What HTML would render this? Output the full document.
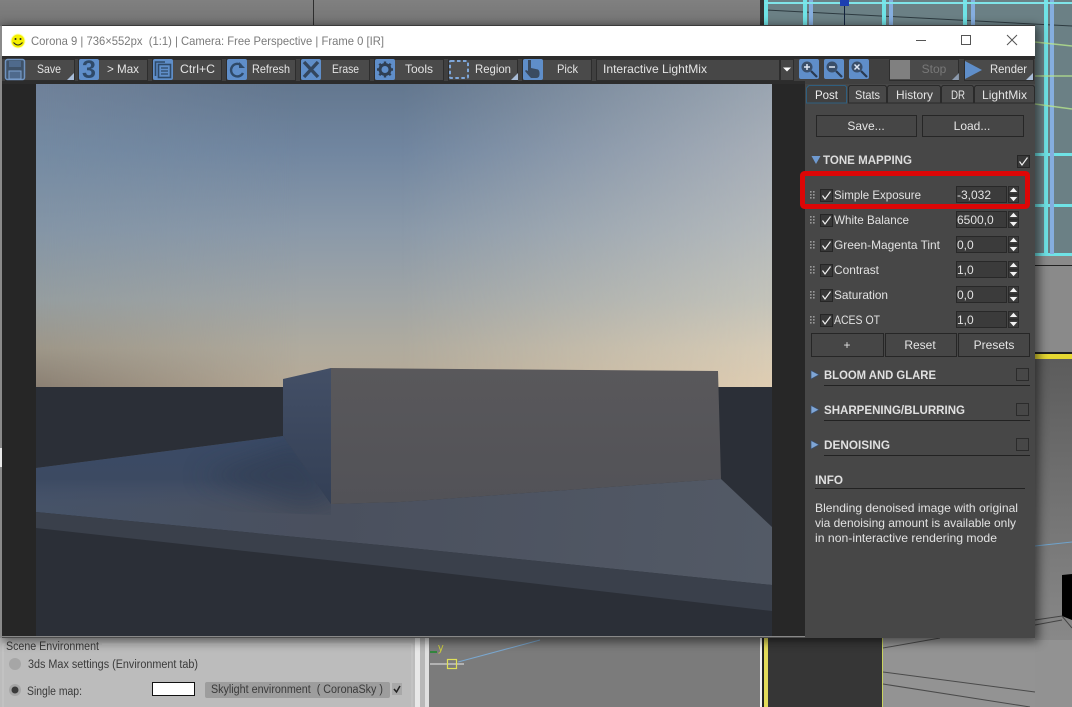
<!DOCTYPE html>
<html><head><meta charset="utf-8"><style>
html,body{margin:0;padding:0;background:#777;overflow:hidden}
svg{display:block}
text{font-family:"Liberation Sans",Arial,sans-serif;font-size:12px;fill:#e2e2e2;white-space:pre}
.tb{text-anchor:middle;font-size:12px;fill:#e4e4e4}
.tl{font-size:12px;fill:#e4e4e4}
.h{font-weight:bold;fill:#dcdcdc;font-size:12px}
.d{fill:#3a3a3a;font-size:11.5px}
</style></head><body>
<svg width="1072" height="707" viewBox="0 0 1072 707" xmlns="http://www.w3.org/2000/svg">
<defs>
<linearGradient id="sL" x1="0" y1="84" x2="0" y2="388" gradientUnits="userSpaceOnUse"><stop offset="0" stop-color="#6f8199"/><stop offset=".22" stop-color="#748aa2"/><stop offset=".48" stop-color="#8495a6"/><stop offset=".71" stop-color="#959d9f"/><stop offset=".87" stop-color="#9d9688"/><stop offset="1" stop-color="#8a7f72"/></linearGradient>
<linearGradient id="sM" x1="0" y1="84" x2="0" y2="388" gradientUnits="userSpaceOnUse"><stop offset="0" stop-color="#63778f"/><stop offset=".22" stop-color="#7186a0"/><stop offset=".48" stop-color="#8a99a9"/><stop offset=".71" stop-color="#a0a5a6"/><stop offset=".87" stop-color="#b0ab9e"/><stop offset="1" stop-color="#b7aa96"/></linearGradient>
<linearGradient id="sR" x1="0" y1="84" x2="0" y2="388" gradientUnits="userSpaceOnUse"><stop offset="0" stop-color="#9aa5b1"/><stop offset=".22" stop-color="#a8afb8"/><stop offset=".48" stop-color="#b5babc"/><stop offset=".71" stop-color="#c3c3ba"/><stop offset=".87" stop-color="#d6cbb6"/><stop offset="1" stop-color="#dfcdb2"/></linearGradient>
<linearGradient id="mlg" x1="36" y1="0" x2="300" y2="0" gradientUnits="userSpaceOnUse"><stop offset="0" stop-color="#fff"/><stop offset="1" stop-color="#000"/></linearGradient>
<linearGradient id="mrg" x1="400" y1="0" x2="772" y2="0" gradientUnits="userSpaceOnUse"><stop offset="0" stop-color="#000"/><stop offset="1" stop-color="#fff"/></linearGradient>
<mask id="ml" maskUnits="userSpaceOnUse" x="0" y="0" width="1072" height="707"><rect width="1072" height="707" fill="url(#mlg)"/></mask>
<mask id="mr" maskUnits="userSpaceOnUse" x="0" y="0" width="1072" height="707"><rect width="1072" height="707" fill="url(#mrg)"/></mask>
<linearGradient id="top" x1="0" y1="0" x2="0" y2="26" gradientUnits="userSpaceOnUse"><stop offset="0" stop-color="#808080"/><stop offset="1" stop-color="#747474"/></linearGradient>
<linearGradient id="shad" x1="0" y1="436" x2="0" y2="508" gradientUnits="userSpaceOnUse"><stop offset="0" stop-color="#3a4a66"/><stop offset=".6" stop-color="#3c4a62"/><stop offset="1" stop-color="#44506a" stop-opacity="0"/></linearGradient>
<linearGradient id="floor" x1="36" y1="480" x2="772" y2="560" gradientUnits="userSpaceOnUse"><stop offset="0" stop-color="#465368"/><stop offset=".4" stop-color="#4a505e"/><stop offset="1" stop-color="#535a66"/></linearGradient>
<linearGradient id="side" x1="0" y1="370" x2="0" y2="504" gradientUnits="userSpaceOnUse"><stop offset="0" stop-color="#434f66"/><stop offset="1" stop-color="#333f55"/></linearGradient>
<linearGradient id="face" x1="0" y1="368" x2="0" y2="504" gradientUnits="userSpaceOnUse"><stop offset="0" stop-color="#59585b"/><stop offset="1" stop-color="#525257"/></linearGradient>
<linearGradient id="rg" x1="0" y1="359" x2="0" y2="640" gradientUnits="userSpaceOnUse"><stop offset="0" stop-color="#5c5c5c"/><stop offset="1" stop-color="#888"/></linearGradient>
<clipPath id="shClip"><polygon points="36,468 283,436 331,504 331,515 36,505"/></clipPath>
<filter id="ws" x="-5%" y="-5%" width="110%" height="110%"><feGaussianBlur stdDeviation="5"/></filter>
<filter id="b6" x="-50%" y="-50%" width="200%" height="200%"><feGaussianBlur stdDeviation="12"/></filter>
<g id="cb"><rect x=".5" y=".5" width="12" height="12" fill="#383838" stroke="#262626"/><path d="M2.500 6.500L5 10L10.500 2.500" fill="none" stroke="#f0f0f0" stroke-width="1.200"/></g>
<g id="grip" fill="#9a9a9a"><rect x="0" y="0" width="1.600" height="1.600"/><rect x="3" y="0" width="1.600" height="1.600"/><rect x="0" y="3" width="1.600" height="1.600"/><rect x="3" y="3" width="1.600" height="1.600"/><rect x="0" y="6" width="1.600" height="1.600"/><rect x="3" y="6" width="1.600" height="1.600"/></g>
<g id="spin"><rect x=".5" y=".5" width="10" height="7.500" fill="#3c3c3c" stroke="#2a2a2a"/><rect x=".5" y="9" width="10" height="7.500" fill="#3c3c3c" stroke="#2a2a2a"/><path d="M1.800 6L5.500 1.800L9.200 6Z M1.800 11L9.200 11L5.500 15.300Z" fill="#f2f2f2"/></g>
<g id="btn"><rect x=".5" y=".5" width="69" height="21" fill="#4a4a4a" stroke="#2d2d2d"/></g>
<g id="corner"><path d="M0 7L7 0L7 7Z" fill="#a9bdd8"/></g>
</defs>

<!-- backgrounds -->
<rect width="1072" height="707" fill="#777"/>
<rect width="762" height="26" fill="url(#top)"/>
<rect x="313" y="0" width="1" height="26" fill="#2e2e2e"/>
<rect x="760" y="0" width="5" height="26" fill="#333"/>

<!-- top right viewport -->
<rect x="765" y="0" width="307" height="256" fill="#6b8085"/>
<path d="M766 10L1072 26" stroke="#2d3a40" stroke-width="1" fill="none"/>
<g fill="#6fe3e6">
<rect x="764" y="0" width="4" height="26"/><rect x="803" y="0" width="4" height="26"/><rect x="882" y="0" width="4" height="26"/><rect x="963" y="0" width="4" height="26"/><rect x="1044" y="0" width="4" height="256"/>
<rect x="1035" y="153" width="37" height="3"/><rect x="1035" y="204" width="37" height="3"/><rect x="1035" y="253" width="37" height="3"/>
</g>
<g fill="#85aedf">
<rect x="809" y="0" width="4" height="26"/><rect x="889" y="0" width="4" height="26"/><rect x="971" y="0" width="4" height="26"/><rect x="1050" y="0" width="4" height="254"/>
</g>
<rect x="765" y="2" width="307" height="2" fill="#7fe4e8"/>
<rect x="840" y="0" width="9" height="6" fill="#1c3fb0"/><rect x="844" y="6" width="1" height="20" fill="#12233d"/>
<path d="M1035 42L1072 46M1035 76L1072 76M1035 104L1072 109" stroke="#b7e48c" stroke-width="1.500" fill="none" opacity=".8"/>
<rect x="1035" y="256" width="37" height="97" fill="#8a8a8a"/>
<rect x="1035" y="265" width="37" height="1" fill="#222"/>
<rect x="1035" y="352" width="37" height="2" fill="#1e1e1e"/>
<rect x="1035" y="354" width="37" height="5" fill="#e6d832"/>
<rect x="1035" y="359" width="37" height="290" fill="url(#rg)"/>
<rect x="1035" y="640" width="37" height="67" fill="#929292"/>
<path d="M1035 546L1072 542" stroke="#6fa3cc" fill="none"/>
<path d="M1062 575L1072 574L1072 620L1062 616Z" fill="#000"/>
<path d="M1035 620L1062 616L1072 628M1035 625L1062 620" stroke="#444" fill="none"/>

<!-- bottom area -->
<rect x="0" y="638" width="415" height="69" fill="#bcbcbc"/>
<rect x="415" y="638" width="5" height="69" fill="#e8e8e8"/>
<rect x="420" y="638" width="5" height="69" fill="#b8b8b8"/>
<rect x="425" y="638" width="4" height="69" fill="#e0e0e0"/>
<rect x="429" y="638" width="331" height="69" fill="#7b7b7b"/>
<path d="M3 707V644H5M102 644H412V707" fill="none" stroke="#c8c8c8"/>
<text x="6" y="650" class="d" textLength="93" lengthAdjust="spacingAndGlyphs">Scene Environment</text>
<circle cx="15" cy="664" r="6" fill="#a6a6a6"/>
<circle cx="15" cy="690" r="6" fill="#a6a6a6"/><circle cx="15" cy="690" r="3.500" fill="#3a3a3a"/>
<text x="28" y="668" class="d" textLength="170" lengthAdjust="spacingAndGlyphs">3ds Max settings (Environment tab)</text>
<text x="27" y="695" class="d" textLength="55" lengthAdjust="spacingAndGlyphs">Single map:</text>
<rect x="152.500" y="682.500" width="42" height="13" fill="#fff" stroke="#111"/>
<rect x="205" y="682" width="185" height="16" rx="2" fill="#9d9d9d"/>
<text x="211" y="693" class="d" textLength="172" lengthAdjust="spacingAndGlyphs">Skylight environment  ( CoronaSky )</text>
<rect x="392" y="683" width="10" height="12" fill="#a8a8a8"/>
<path d="M394 689L396.500 692L400 686" stroke="#222" stroke-width="1.500" fill="none"/>
<path d="M430 652H437" stroke="#1c8a2c" stroke-width="1.500"/>
<text x="438" y="651" style="fill:#cfcf40;font-size:11px">y</text>
<path d="M430 664H464" stroke="#e8e8e8"/>
<rect x="447.500" y="659.500" width="9" height="9" fill="none" stroke="#dfe05a" stroke-width="1.200"/>
<path d="M458 662L540 640" stroke="#7aa7cf" fill="none"/>
<rect x="760" y="638" width="2" height="69" fill="#f2f2f2"/>
<rect x="762" y="638" width="2" height="69" fill="#222"/>
<rect x="764" y="638" width="4" height="69" fill="#e4dc5a"/>
<rect x="768" y="638" width="114" height="69" fill="#363636"/>
<rect x="882" y="638" width="1" height="69" fill="#c9d35f"/>
<rect x="883" y="638" width="152" height="69" fill="#939393"/>
<path d="M883 648L940 638M883 672L1035 692M883 684L1030 707" stroke="#4a4a4a" fill="none"/>

<!-- window shadow & window -->
<rect x="2" y="26" width="1037" height="616" fill="#000" opacity=".5" filter="url(#ws)"/>
<rect x="2" y="25" width="1033" height="1" fill="#3a3a3a"/>
<rect x="2" y="26" width="1033" height="30" fill="#fff"/>
<rect x="2" y="56" width="1033" height="582" fill="#404040"/>
<rect x="2" y="56" width="1033" height="3" fill="#2c2c2c"/>
<rect x="2" y="81" width="803" height="3" fill="#2c2c2c"/>
<rect x="2" y="84" width="34" height="553" fill="#262626"/>
<rect x="772" y="84" width="33" height="553" fill="#272727"/>
<rect x="805" y="84" width="230" height="554" fill="#474747"/>
<rect x="2" y="636" width="803" height="1" fill="#888"/>
<rect x="2" y="637" width="803" height="1" fill="#4d4d4d"/>

<!-- render image -->
<rect x="36" y="84" width="736" height="304" fill="url(#sM)"/>
<rect x="36" y="84" width="736" height="304" fill="url(#sL)" mask="url(#ml)"/>
<rect x="36" y="84" width="736" height="304" fill="url(#sR)" mask="url(#mr)"/>
<rect x="36" y="387" width="736" height="249" fill="#2b2f37"/>
<polygon points="36,468 283,436 331,504 400,502 721,479 772,527 772,585 400,547 36,512" fill="url(#floor)"/>
<g clip-path="url(#shClip)">
<polygon points="36,468 283,436 331,504 331,515 36,505" fill="url(#shad)"/>
<polygon points="200,475 300,440 345,500 300,510" fill="#2f3b50" opacity=".55" filter="url(#b6)"/>
</g>
<polygon points="283,379 331,368 331,504 283,436" fill="url(#side)"/>
<polygon points="331,368 718,371 721,479 400,502 331,504" fill="url(#face)"/>
<polygon points="36,512 400,547 772,585 772,611 400,568 36,528" fill="#3a404b"/>

<!-- title bar -->
<circle cx="18" cy="41" r="7.500" fill="#fbff70" opacity=".5"/>
<circle cx="18" cy="41" r="6.500" fill="#f4f000"/>
<circle cx="15.500" cy="39" r="1" fill="#222"/><circle cx="20.500" cy="39" r="1" fill="#222"/>
<path d="M13.500 42.500Q18 47.500 22.500 42.500" stroke="#222" stroke-width="1" fill="none"/>
<text x="31" y="45" style="fill:#7a7a7a;font-size:12px" textLength="353" lengthAdjust="spacingAndGlyphs">Corona 9 | 736×552px  (1:1) | Camera: Free Perspective | Frame 0 [IR]</text>
<path d="M916 40.500H926" stroke="#555"/>
<rect x="961.500" y="35.500" width="9" height="9" fill="none" stroke="#555"/>
<path d="M1007 35L1017 45M1017 35L1007 45" stroke="#555" fill="none"/>

<!-- toolbar -->
<use href="#btn" x="5" y="59"/><use href="#btn" x="78" y="59"/><use href="#btn" x="152" y="59"/><use href="#btn" x="226" y="59"/><use href="#btn" x="300" y="59"/><use href="#btn" x="374" y="59"/><use href="#btn" x="448" y="59"/><use href="#btn" x="522" y="59"/>
<use href="#btn" x="889" y="59"/><use href="#btn" x="964" y="59"/>
<rect x="596.500" y="59.500" width="183" height="21" fill="#474747" stroke="#2d2d2d"/>
<rect x="780.500" y="59.500" width="13" height="21" fill="#474747" stroke="#2d2d2d"/>
<path d="M783 67.500H791L787 71.500Z" fill="#fff"/>
<text class="tl" x="37" y="73" textLength="24" lengthAdjust="spacingAndGlyphs">Save</text>
<text class="tl" x="107" y="73" textLength="32" lengthAdjust="spacingAndGlyphs">&gt; Max</text>
<text class="tl" x="180" y="73" textLength="35" lengthAdjust="spacingAndGlyphs">Ctrl+C</text>
<text class="tl" x="252" y="73" textLength="38" lengthAdjust="spacingAndGlyphs">Refresh</text>
<text class="tl" x="332" y="73" textLength="27" lengthAdjust="spacingAndGlyphs">Erase</text>
<text class="tl" x="405" y="73" textLength="28" lengthAdjust="spacingAndGlyphs">Tools</text>
<text class="tl" x="475" y="73" textLength="36" lengthAdjust="spacingAndGlyphs">Region</text>
<text class="tl" x="557" y="73" textLength="21" lengthAdjust="spacingAndGlyphs">Pick</text>
<text x="603" y="73" style="fill:#e4e4e4" textLength="104" lengthAdjust="spacingAndGlyphs">Interactive LightMix</text>
<text class="tb" x="934" y="73" style="fill:#787878">Stop</text>
<text class="tl" x="990" y="73" textLength="37" lengthAdjust="spacingAndGlyphs">Render</text>
<use href="#corner" x="67" y="73"/><use href="#corner" x="511" y="73"/><use href="#corner" x="952" y="73" opacity=".7"/><use href="#corner" x="1026" y="73"/>

<!-- save -->
<rect x="5.500" y="59.500" width="19" height="20" rx="2" fill="#3f5268" stroke="#6f93c0" stroke-width="1.500"/>
<rect x="9" y="61" width="12" height="6" fill="#4f6a8c"/>
<rect x="9" y="71" width="12" height="8" fill="#4f6a8c" stroke="#7ea2cf"/>
<!-- 3 -->
<rect x="79" y="59" width="20" height="21" rx="2" fill="#5f8ec9"/>
<text x="89" y="78" style="font-size:25px;font-weight:bold;fill:#2f4a69;text-anchor:middle">3</text>
<!-- copy -->
<rect x="153" y="59" width="20" height="21" rx="2" fill="#5f8ec9"/>
<path d="M155.500 76V62H165" stroke="#2f4a69" stroke-width="1.600" fill="none"/>
<rect x="158.500" y="64.500" width="12" height="13" fill="none" stroke="#2f4a69" stroke-width="1.600"/>
<path d="M161 68H168M161 71H168M161 74H168" stroke="#2f4a69" stroke-width="1.300"/>
<!-- refresh -->
<rect x="227" y="59" width="20" height="21" rx="2" fill="#5f8ec9"/>
<path d="M243 73A6.300 6.300 0 1 1 241 65" stroke="#2f4a69" stroke-width="2.400" fill="none"/>
<path d="M239 62V68H245Z" fill="#2f4a69"/>
<!-- erase -->
<rect x="301" y="59" width="20" height="21" rx="2" fill="#5f8ec9"/>
<path d="M304 62L318 77M318 62L304 77" stroke="#33465e" stroke-width="3.400" fill="none"/>
<!-- gear -->
<rect x="375" y="59" width="20" height="21" rx="2" fill="#5f8ec9"/>
<circle cx="385" cy="69.500" r="5" fill="none" stroke="#2f3f53" stroke-width="3"/>
<path d="M385 61.500V64M385 75V77.500M377 69.500H379.500M390.500 69.500H393M379.300 63.800L381 65.500M389 73.500L390.700 75.200M390.700 63.800L389 65.500M381 73.500L379.300 75.200" stroke="#2f3f53" stroke-width="2.400"/>
<!-- region -->
<rect x="450" y="61" width="18" height="17" fill="#4f4f4f"/>
<rect x="450" y="61" width="18" height="17" rx="1" fill="none" stroke="#7ea7da" stroke-width="2" stroke-dasharray="3.500 2.500"/>
<!-- pick -->
<rect x="523" y="59" width="20" height="21" rx="2" fill="#5f8ec9"/>
<path d="M528 60H531V68L538 69.500Q540 71 539.500 75Q539 78 536 78H531Q529 76 525 71L526 70L528 71Z" fill="#3a4b60"/>
<!-- zoom icons -->
<rect x="799" y="59" width="20" height="20" rx="2" fill="#5f8ec9"/>
<rect x="824" y="59" width="20" height="20" rx="2" fill="#5f8ec9"/>
<rect x="849" y="59" width="20" height="20" rx="2" fill="#5f8ec9"/>
<g fill="#3a4f6a" stroke="none">
<circle cx="807" cy="67" r="5.500"/><circle cx="832" cy="67" r="5.500"/><circle cx="857" cy="67" r="5.500"/>
</g>
<path d="M811 71L817 77M836 71L842 77M861 71L867 77" stroke="#2a3a50" stroke-width="2.200"/>
<path d="M804 67H810M807 64V70M829 67H835M854.500 64.500L859.500 69.500M859.500 64.500L854.500 69.500" stroke="#dfe8f5" stroke-width="1.500"/>
<!-- stop/render icon -->
<rect x="890" y="60" width="20" height="19" fill="#808080"/>
<path d="M965 61V79L982 70Z" fill="#5f8ec9"/>

<!-- tabs -->
<path d="M848.500 103V87L850 85.500H885L886.500 87V103ZM887.500 103V87L889 85.500H939L940.500 87V103ZM941.500 103V87L943 85.500H972L973.500 87V103ZM974.500 103V87L976 85.500H1033L1034.500 87V103Z" fill="#484848" stroke="#2a2a2a"/>
<path d="M806.500 103V88L809 85.500H845L846.500 87V103Z" fill="#404040" stroke="#2f5f7f"/>
<text class="tl" x="815" y="99" textLength="23" lengthAdjust="spacingAndGlyphs" style="fill:#eee">Post</text>
<text class="tl" x="855" y="99" textLength="25" lengthAdjust="spacingAndGlyphs">Stats</text>
<text class="tl" x="896" y="99" textLength="37" lengthAdjust="spacingAndGlyphs">History</text>
<text class="tl" x="951" y="99" textLength="14" lengthAdjust="spacingAndGlyphs">DR</text>
<text class="tl" x="982" y="99" textLength="45" lengthAdjust="spacingAndGlyphs">LightMix</text>

<rect x="816.500" y="115.500" width="100" height="21" fill="#464646" stroke="#262626"/>
<rect x="922.500" y="115.500" width="101" height="21" fill="#464646" stroke="#262626"/>
<text class="tb" x="866" y="130">Save...</text>
<text class="tb" x="972" y="130">Load...</text>

<!-- tone mapping -->
<path d="M811.500 156H820.500L816 164Z" fill="#6f9ad0"/>
<text x="823" y="164" class="h" textLength="89" lengthAdjust="spacingAndGlyphs">TONE MAPPING</text>
<use href="#cb" x="1017" y="155"/>

<rect x="802.500" y="173.500" width="225" height="33" rx="2" fill="none" stroke="#dd0606" stroke-width="5"/>

<use href="#grip" x="810" y="191"/><use href="#cb" x="820" y="189"/><text x="834" y="199" textLength="87" lengthAdjust="spacingAndGlyphs">Simple Exposure</text>
<use href="#grip" x="810" y="216"/><use href="#cb" x="820" y="214"/><text x="834" y="224" textLength="75" lengthAdjust="spacingAndGlyphs">White Balance</text>
<use href="#grip" x="810" y="241"/><use href="#cb" x="820" y="239"/><text x="834" y="249" textLength="106" lengthAdjust="spacingAndGlyphs">Green-Magenta Tint</text>
<use href="#grip" x="810" y="266"/><use href="#cb" x="820" y="264"/><text x="834" y="274" textLength="45" lengthAdjust="spacingAndGlyphs">Contrast</text>
<use href="#grip" x="810" y="291"/><use href="#cb" x="820" y="289"/><text x="834" y="299" textLength="54" lengthAdjust="spacingAndGlyphs">Saturation</text>
<use href="#grip" x="810" y="316"/><use href="#cb" x="820" y="314"/><text x="834" y="324" textLength="46" lengthAdjust="spacingAndGlyphs">ACES OT</text>

<g fill="#3b3b3b" stroke="#282828">
<rect x="956.500" y="186.500" width="50" height="16"/><rect x="956.500" y="211.500" width="50" height="16"/><rect x="956.500" y="236.500" width="50" height="16"/><rect x="956.500" y="261.500" width="50" height="16"/><rect x="956.500" y="286.500" width="50" height="16"/><rect x="956.500" y="311.500" width="50" height="16"/>
</g>
<text x="957" y="199">-3,032</text><text x="957" y="224">6500,0</text><text x="957" y="249">0,0</text><text x="957" y="274">1,0</text><text x="957" y="299">0,0</text><text x="957" y="324">1,0</text>
<use href="#spin" x="1008" y="186"/><use href="#spin" x="1008" y="211"/><use href="#spin" x="1008" y="236"/><use href="#spin" x="1008" y="261"/><use href="#spin" x="1008" y="286"/><use href="#spin" x="1008" y="311"/>

<g fill="#464646" stroke="#262626">
<rect x="811.500" y="333.500" width="72" height="23"/><rect x="885.500" y="333.500" width="71" height="23"/><rect x="958.500" y="333.500" width="71" height="23"/>
</g>
<text class="tb" x="847" y="349">+</text><text class="tb" x="920" y="349">Reset</text><text class="tb" x="994" y="349">Presets</text>

<g fill="#7fa6d6" stroke="#3a5070" stroke-width=".7">
<path d="M811 370.500V379L819 374.700Z"/><path d="M811 405.500V414L819 409.700Z"/><path d="M811 440.500V449L819 444.700Z"/>
</g>
<text x="824" y="379" class="h" style="fill:#e0e0e0" textLength="112" lengthAdjust="spacingAndGlyphs">BLOOM AND GLARE</text>
<text x="824" y="414" class="h" style="fill:#e0e0e0" textLength="141" lengthAdjust="spacingAndGlyphs">SHARPENING/BLURRING</text>
<text x="824" y="449" class="h" style="fill:#e0e0e0" textLength="66" lengthAdjust="spacingAndGlyphs">DENOISING</text>
<g fill="none" stroke="#2b2b2b">
<rect x="1016.500" y="368.500" width="12" height="12"/><rect x="1016.500" y="403.500" width="12" height="12"/><rect x="1016.500" y="438.500" width="12" height="12"/>
</g>
<path d="M824 385.500H1030M824 420.500H1030M824 455.500H1030M815 488.500H1025" stroke="#222" fill="none"/>
<text x="815" y="484" class="h" style="fill:#e0e0e0" textLength="28" lengthAdjust="spacingAndGlyphs">INFO</text>
<text x="815" y="512" textLength="203" lengthAdjust="spacingAndGlyphs">Blending denoised image with original</text>
<text x="815" y="527" textLength="201" lengthAdjust="spacingAndGlyphs">via denoising amount is available only</text>
<text x="815" y="542" textLength="182" lengthAdjust="spacingAndGlyphs">in non-interactive rendering mode</text>

<!-- left edge -->
<rect x="0" y="26" width="2" height="612" fill="#8a8a8a"/>
<rect x="0" y="448" width="2" height="19" fill="#e8e8e8"/>
</svg>
</body></html>
